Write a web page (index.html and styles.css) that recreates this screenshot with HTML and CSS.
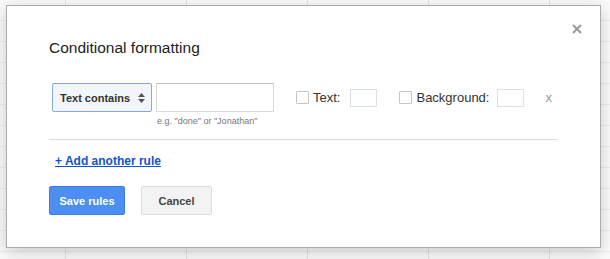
FILE: index.html
```html
<!DOCTYPE html>
<html>
<head>
<meta charset="utf-8">
<link rel="stylesheet" href="styles.css">
</head>
<body>
<div class="sheet">
  <div class="dialog">
    <button class="close" aria-label="Close">
      <svg width="10" height="10" viewBox="0 0 10 10"><path d="M1 1L9 9M9 1L1 9" stroke="#999" stroke-width="2"/></svg>
    </button>
    <h1 class="title">Conditional formatting</h1>
    <div class="rule">
      <div class="select">
        <span>Text contains</span>
        <svg class="arrows" width="7" height="10" viewBox="0 0 7 10"><path d="M3.5 0L7 4H0Z M0 6H7L3.5 10Z" fill="#555"/></svg>
      </div>
      <div class="input"></div>
      <label class="opt opt-text"><span class="check"></span>Text:<span class="swatch"></span></label>
      <label class="opt opt-bg"><span class="check"></span>Background:<span class="swatch"></span></label>
      <span class="remove">x</span>
    </div>
    <div class="hint">e.g. "done" or "Jonathan"</div>
    <div class="divider"></div>
    <a class="add" href="#">+ Add another rule</a>
    <div class="buttons">
      <button class="btn primary">Save rules</button>
      <button class="btn">Cancel</button>
    </div>
  </div>
</div>
</body>
</html>
```
FILE: styles.css
```css
html, body {
  margin: 0;
  padding: 0;
}
body {
  width: 610px;
  height: 259px;
  overflow: hidden;
  font-family: "Liberation Sans", Arial, sans-serif;
  background-color: #fbfbfb;
  background-image:
    repeating-linear-gradient(to right, transparent 0, transparent 65px, #e4e4e4 65px, #e4e4e4 66px, transparent 66px, transparent 121px),
    repeating-linear-gradient(to bottom, transparent 0, transparent 20px, #eeeeee 20px, #eeeeee 21px);
}
.sheet {
  padding: 5px 0 0 6px;
}
.dialog {
  position: relative;
  box-sizing: border-box;
  width: 595px;
  height: 243px;
  background: #fff;
  border: 1px solid #acacac;
  box-shadow: 0 4px 16px rgba(0, 0, 0, 0.2);
  padding: 32px 42px 0 42px;
}
.close {
  position: absolute;
  top: 18px;
  right: 18px;
  border: 0;
  background: none;
  padding: 0;
  width: 10px;
  height: 10px;
  display: block;
}
.close svg { display: block; }
.title {
  margin: 0;
  font-size: 15.5px;
  line-height: 20px;
  font-weight: normal;
  color: #222;
}
.rule {
  margin-top: 25px;
  display: flex;
  align-items: center;
  height: 29px;
}
.select {
  box-sizing: border-box;
  margin-left: 3px;
  width: 100px;
  height: 29px;
  border: 1px solid #86a9e4;
  border-radius: 2px;
  background: #f2f5fa;
  display: flex;
  align-items: center;
  padding-left: 7px;
  font-size: 11px;
  font-weight: bold;
  color: #333;
}
.select .arrows {
  margin-left: 8px;
}
.input {
  box-sizing: border-box;
  margin-left: 4px;
  width: 118px;
  height: 29px;
  border: 1px solid #d9d9d9;
  border-top-color: #c0c0c0;
}
.opt {
  display: flex;
  align-items: center;
  font-size: 13px;
  color: #333;
}
.opt-text { margin-left: 22px; }
.opt-bg { margin-left: 22px; }
.check {
  box-sizing: border-box;
  width: 13px;
  height: 13px;
  border: 1px solid #c6c6c6;
  border-radius: 1px;
  margin-right: 4px;
}
.swatch {
  box-sizing: border-box;
  width: 27px;
  height: 18px;
  border: 1px solid #d6e0ef;
  margin-left: 10px;
}
.opt-bg .swatch { margin-left: 8px; }
.remove {
  margin-left: 21px;
  font-size: 13px;
  color: #999;
}
.hint {
  margin: 4px 0 0 108px;
  font-size: 9px;
  line-height: 11px;
  color: #777;
}
.divider {
  margin-top: 12px;
  width: 508px;
  height: 0;
  border-top: 1px solid #d5dff0;
}
.add {
  display: inline-block;
  margin: 14px 0 0 6px;
  font-size: 12px;
  line-height: 15px;
  font-weight: bold;
  color: #1155cc;
  text-decoration: underline;
}
.buttons {
  margin-top: 17px;
  display: flex;
  gap: 16px;
}
.btn {
  box-sizing: border-box;
  height: 29px;
  padding: 0 8px;
  border: 1px solid #dcdcdc;
  border-radius: 2px;
  background: #f3f3f3;
  font-family: "Liberation Sans", Arial, sans-serif;
  font-size: 11px;
  font-weight: bold;
  color: #444;
  width: 71px;
  white-space: nowrap;
}
.btn.primary {
  width: 76px;
  background: #4d8ff0;
  border-color: #3b7de6;
  color: #fff;
}
```
